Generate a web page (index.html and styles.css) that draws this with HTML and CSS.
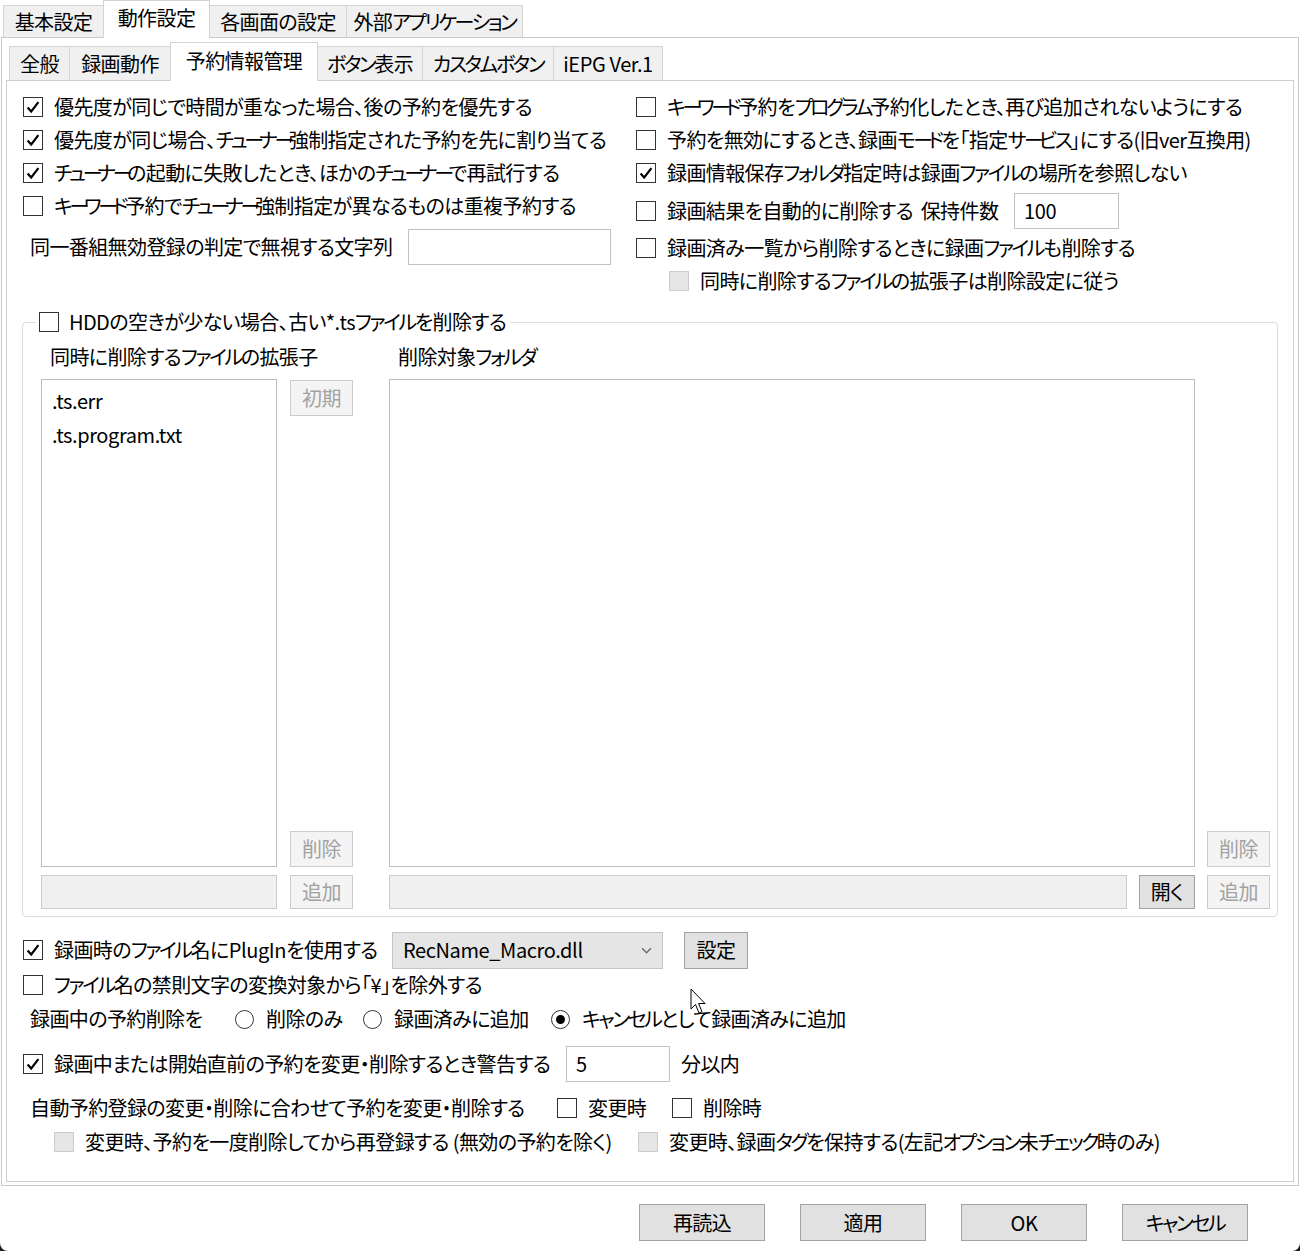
FILE: index.html
```html
<!DOCTYPE html>
<html lang="ja">
<head>
<meta charset="utf-8">
<title>設定</title>
<link rel="stylesheet" href="styles.css">
</head>
<body>
<div class="window">
  <div class="tabs outer-tabs">
    <div class="tab ot1">基本設定</div>
    <div class="tab ot2 active">動作設定</div>
    <div class="tab ot3">各画面の設定</div>
    <div class="tab ot4">外部<span class="k">アプリケーション</span></div>
  </div>
  <div class="panel outer-panel">
    <div class="tabs inner-tabs">
      <div class="tab it1">全般</div>
      <div class="tab it2">録画動作</div>
      <div class="tab it3 active">予約情報管理</div>
      <div class="tab it4"><span class="k">ボタン</span>表示</div>
      <div class="tab it5"><span class="k">カスタムボタン</span></div>
      <div class="tab it6 latin">iEPG Ver.1</div>
    </div>
    <div class="panel inner-panel">
      <div class="top-grid">
        <div class="col col-left">
          <div class="row"><span class="cb checked"><svg viewBox="0 0 20 20"><polyline points="4,10.5 8,15 16,4.5"/></svg></span><span>優先度が同じで時間が重なった場合、後の予約を優先する</span></div>
          <div class="row"><span class="cb checked"><svg viewBox="0 0 20 20"><polyline points="4,10.5 8,15 16,4.5"/></svg></span><span>優先度が同じ場合、<span class="k tn">チュ<span class="bar">ー</span>ナ<span class="bar">ー</span></span>強制指定された予約を先に割り当てる</span></div>
          <div class="row"><span class="cb checked"><svg viewBox="0 0 20 20"><polyline points="4,10.5 8,15 16,4.5"/></svg></span><span><span class="k tn">チュ<span class="bar">ー</span>ナ<span class="bar">ー</span></span>の起動に失敗したとき、ほかの<span class="k tn">チュ<span class="bar">ー</span>ナ<span class="bar">ー</span></span>で再試行する</span></div>
          <div class="row"><span class="cb"></span><span><span class="k tn">キ<span class="bar">ー</span>ワ<span class="bar">ー</span>ド</span>予約で<span class="k tn">チュ<span class="bar">ー</span>ナ<span class="bar">ー</span></span>強制指定が異なるものは重複予約する</span></div>
          <div class="row row-input row-ignore"><span class="lbl lbl-ignore">同一番組無効登録の判定で無視する文字列</span><span class="textbox tb-ignore"></span></div>
        </div>
        <div class="col col-right">
          <div class="row"><span class="cb"></span><span><span class="k tn">キ<span class="bar">ー</span>ワ<span class="bar">ー</span>ド</span>予約を<span class="k tn">プログラム</span>予約化したとき、再び追加されないようにする</span></div>
          <div class="row"><span class="cb"></span><span>予約を無効にするとき、録画<span class="k">モ<span class="bar">ー</span>ド</span>を「指定<span class="k">サ<span class="bar">ー</span>ビス</span>」にする(旧ver互換用)</span></div>
          <div class="row"><span class="cb checked"><svg viewBox="0 0 20 20"><polyline points="4,10.5 8,15 16,4.5"/></svg></span><span>録画情報保存<span class="k">フォルダ</span>指定時は録画<span class="k">ファイル</span>の場所を参照しない</span></div>
          <div class="row row-input row-keep"><span class="item item-keep"><span class="cb"></span><span>録画結果を自動的に削除する&nbsp; 保持件数</span></span><span class="textbox tb-keep latin">100</span></div>
          <div class="row row-after"><span class="cb"></span><span>録画済み一覧から削除するときに録画<span class="k">ファイル</span>も削除する</span></div>
          <div class="row row-sub"><span class="cb disabled"></span><span>同時に削除する<span class="k">ファイル</span>の拡張子は削除設定に従う</span></div>
        </div>
      </div>

      <fieldset class="group">
        <legend><span class="cb"></span><span>HDDの空きが少ない場合、古い*.ts<span class="k">ファイル</span>を削除する</span></legend>
        <div class="group-grid">
          <div class="g-label c1">同時に削除する<span class="k">ファイル</span>の拡張子</div>
          <div class="g-label c3">削除対象<span class="k">フォルダ</span></div>

          <div class="listbox c1 latin">
            <div class="li">.ts.err</div>
            <div class="li">.ts.program.txt</div>
          </div>
          <div class="btncol c2">
            <span class="btn disabled">初期</span>
            <span class="btn disabled">削除</span>
          </div>
          <div class="listbox c3"></div>
          <div class="btncol btncol-end c4">
            <span class="btn disabled">削除</span>
          </div>

          <div class="textbox tb-disabled c1 rowb"></div>
          <div class="c2 rowb"><span class="btn disabled btn-fill">追加</span></div>
          <div class="folder-row c3 rowb"><span class="textbox tb-disabled tb-folder"></span><span class="btn btn-open">開く</span></div>
          <div class="c4 rowb"><span class="btn disabled btn-fill">追加</span></div>
        </div>
      </fieldset>

      <div class="lower">
        <div class="lrow lrow-plugin">
          <span class="item item-plugin"><span class="cb checked"><svg viewBox="0 0 20 20"><polyline points="4,10.5 8,15 16,4.5"/></svg></span><span>録画時の<span class="k">ファイル</span>名に<span class="latin">PlugIn</span>を使用する</span></span>
          <span class="combo"><span class="latin">RecName_Macro.dll</span><svg class="chev" viewBox="0 0 10 6"><polyline points="1,1 5,5 9,1"/></svg></span>
          <span class="btn btn-set">設定</span>
        </div>
        <div class="lrow lrow-yen">
          <span class="item"><span class="cb"></span><span><span class="k">ファイル</span>名の禁則文字の変換対象から「¥」を除外する</span></span>
        </div>
        <div class="lrow lrow-radio">
          <span class="lbl lbl-radio">録画中の予約削除を</span>
          <span class="item item-r1"><span class="radio"></span><span>削除のみ</span></span>
          <span class="item item-r2"><span class="radio"></span><span>録画済みに追加</span></span>
          <span class="item"><span class="radio checked"></span><span><span class="k">キャンセル</span>として録画済みに追加</span></span>
        </div>
        <div class="lrow lrow-warn">
          <span class="item item-warn"><span class="cb checked"><svg viewBox="0 0 20 20"><polyline points="4,10.5 8,15 16,4.5"/></svg></span><span>録画中または開始直前の予約を変更・削除するとき警告する</span></span>
          <span class="textbox tb-min latin">5</span>
          <span class="unit">分以内</span>
        </div>
        <div class="lrow lrow-auto">
          <span class="lbl lbl-auto">自動予約登録の変更・削除に合わせて予約を変更・削除する</span>
          <span class="item item-chg"><span class="cb"></span><span>変更時</span></span>
          <span class="item"><span class="cb"></span><span>削除時</span></span>
        </div>
        <div class="lrow lrow-dis">
          <span class="item item-dis1"><span class="cb disabled"></span><span>変更時、予約を一度削除してから再登録する (無効の予約を除く)</span></span>
          <span class="item"><span class="cb disabled"></span><span>変更時、録画<span class="k">タグ</span>を保持する(左記<span class="k">オプション</span>未<span class="k">チェック</span>時のみ)</span></span>
        </div>
      </div>
    </div>
  </div>

  <div class="dialog-buttons">
    <span class="btn btn-dlg">再読込</span>
    <span class="btn btn-dlg">適用</span>
    <span class="btn btn-dlg latin">OK</span>
    <span class="btn btn-dlg"><span class="k">キャンセル</span></span>
  </div>

  <svg class="cursor" viewBox="0 0 18 28"><path d="M1,1 L1,21 L5.5,16.5 L9,25 L12,23.8 L8.6,15.5 L15,15.5 Z"/></svg>
</div>
</body>
</html>
```

FILE: styles.css
```css
html {
  background: #1e1e1e;
}
body {
  margin: 0;
  width: 1300px;
  height: 1251px;
  background: #ffffff;
  border-radius: 0 0 8px 8px;
  overflow: hidden;
  font-family: "Noto Sans CJK JP", "Noto Sans", sans-serif;
  font-feature-settings: "palt" 1;
  font-size: 20px;
  line-height: 1.2;
  letter-spacing: -0.6px;
  color: #000;
}
.k {
  letter-spacing: -2.4px;
}
.k .bar {
  letter-spacing: -5px;
}
.k.tn {
  letter-spacing: -3.2px;
}
.k.tn .bar {
  letter-spacing: -5.5px;
}
.latin {
  letter-spacing: -0.4px;
}
.window {
  position: relative;
  width: 1300px;
  height: 1251px;
}

/* ---------- tabs ---------- */
.tabs {
  display: flex;
  align-items: flex-end;
}
.tab {
  box-sizing: border-box;
  display: flex;
  align-items: center;
  justify-content: center;
  background: #f0f0f0;
  border: 1px solid #d4d4d4;
  border-bottom: none;
  margin-right: -1px;
  white-space: nowrap;
}
.tab.active {
  background: #ffffff;
  position: relative;
  z-index: 2;
  margin-bottom: -1px;
}
.outer-tabs {
  height: 37px;
  padding-left: 3px;
}
.outer-tabs .tab { height: 32px; }
.outer-tabs .tab.active { height: 38px; padding-bottom: 3px; }
.ot1 { width: 101px; }
.ot2 { width: 107px; }
.ot3 { width: 138px; }
.ot4 { width: 177px; }

.inner-tabs {
  height: 42px;
  padding-left: 3px;
}
.inner-tabs .tab { height: 34px; }
.inner-tabs .tab.active { height: 39px; padding-bottom: 3px; }
.it1 { width: 61px; }
.it2 { width: 102px; }
.it3 { width: 148px; }
.it4 { width: 106px; }
.it5 { width: 132px; }
.it6 { width: 110px; }

/* ---------- panels ---------- */
.panel {
  box-sizing: border-box;
}
.outer-panel {
  margin-left: 1px;
  width: 1298px;
  height: 1149px;
  border: 1px solid #c9c9c9;
  padding: 0 4px 3px 4px;
}
.inner-panel {
  height: 1102px;
  border: 1px solid #cfcfcf;
  padding: 9px 0 0 16px;
}

/* ---------- top section ---------- */
.top-grid {
  display: grid;
  grid-template-columns: 613px 1fr;
  height: 207px;
}
.row {
  display: flex;
  align-items: center;
  height: 33px;
  white-space: nowrap;
}
.row-ignore {
  margin-top: 7px;
  height: 35px;
  padding-left: 7px;
}
.lbl-ignore { width: 378px; }
.row-keep {
  margin-top: 4px;
  height: 35px;
}
.item-keep { width: 378px; }
.row-after { margin-top: 3px; }
.row-sub { padding-left: 33px; }

.item {
  display: flex;
  align-items: center;
  white-space: nowrap;
}

/* ---------- check boxes / radios ---------- */
.cb {
  box-sizing: border-box;
  flex: none;
  width: 20px;
  height: 20px;
  border: 1px solid #333333;
  background: #ffffff;
  margin-right: 11px;
  display: inline-flex;
}
.cb svg {
  width: 18px;
  height: 18px;
  fill: none;
  stroke: #000;
  stroke-width: 2.4;
}
.cb.disabled {
  background: #e6e6e6;
  border-color: #cccccc;
}
.radio {
  box-sizing: border-box;
  flex: none;
  width: 19px;
  height: 19px;
  border: 1px solid #333333;
  border-radius: 50%;
  margin-right: 12px;
  display: inline-flex;
  align-items: center;
  justify-content: center;
}
.radio.checked::after {
  content: "";
  width: 9px;
  height: 9px;
  border-radius: 50%;
  background: #000;
}

/* ---------- text boxes / buttons ---------- */
.textbox {
  box-sizing: border-box;
  display: flex;
  align-items: center;
  border: 1px solid #c2c2c2;
  background: #ffffff;
  padding-left: 9px;
}
.tb-ignore { width: 203px; height: 36px; }
.tb-keep { width: 105px; height: 36px; }
.tb-disabled {
  background: #f0f0f0;
  border-color: #cccccc;
}
.btn {
  box-sizing: border-box;
  display: flex;
  align-items: center;
  justify-content: center;
  background: #e1e1e1;
  border: 1px solid #a3a3a3;
  white-space: nowrap;
}
.btn.disabled {
  background: #f4f4f4;
  border-color: #cccccc;
  color: #a2a2a2;
}

/* ---------- group ---------- */
.group {
  margin: 13px 15px 0 -1px;
  padding: 0 0 7px 0;
  border: 1px solid #dcdcdc;
  border-radius: 4px;
  min-width: 0;
}
.group legend {
  margin-left: 13px;
  padding: 0 4px 0 3px;
  height: 24px;
  display: flex;
  align-items: center;
  white-space: nowrap;
}
.group legend .cb { margin-right: 10px; }
.group-grid {
  display: grid;
  grid-template-columns: 18px 236px 13px 63px 36px 806px 12px 63px;
  grid-template-rows: 28px 488px 34px;
  row-gap: 8px;
  margin-top: 9px;
}
.c1 { grid-column: 2; }
.c2 { grid-column: 4; }
.c3 { grid-column: 6; }
.c4 { grid-column: 8; }
.rowb { grid-row: 3; }
.g-label {
  grid-row: 1;
  display: flex;
  align-items: center;
  padding-left: 9px;
  white-space: nowrap;
}
.listbox {
  grid-row: 2;
  box-sizing: border-box;
  border: 1px solid #bdbdbd;
  background: #fff;
  padding: 4px 0 0 10px;
}
.li {
  height: 34px;
  display: flex;
  align-items: center;
}
.btncol {
  grid-row: 2;
  display: flex;
  flex-direction: column;
  justify-content: space-between;
  padding-top: 1px;
}
.btncol-end { justify-content: flex-end; }
.btncol .btn { height: 36px; }
.btn-fill { height: 100%; }
.folder-row {
  display: flex;
  gap: 12px;
}
.tb-folder { flex: 1; }
.btn-open { width: 56px; }

/* ---------- lower rows ---------- */
.lower {
  margin-top: 15px;
}
.lrow {
  display: flex;
  align-items: center;
  white-space: nowrap;
}
.lrow-plugin { height: 36px; }
.item-plugin { width: 369px; }
.combo {
  box-sizing: border-box;
  width: 271px;
  height: 37px;
  display: flex;
  align-items: center;
  justify-content: space-between;
  padding: 0 10px 0 10px;
  background: #e5e5e5;
  border: 1px solid #c4c4c4;
}
.chev {
  width: 11px;
  height: 7px;
  fill: none;
  stroke: #6b6b6b;
  stroke-width: 1.3;
}
.btn-set {
  margin-left: 21px;
  width: 64px;
  height: 37px;
}
.lrow-yen { height: 34px; }
.lrow-radio { height: 34px; padding-left: 7px; }
.lbl-radio { width: 205px; }
.item-r1 { width: 128px; }
.item-r2 { width: 188px; }
.lrow-warn { height: 35px; margin-top: 10px; }
.item-warn { width: 543px; }
.tb-min { width: 104px; height: 36px; }
.unit { margin-left: 11px; }
.lrow-auto { height: 34px; margin-top: 10px; padding-left: 7px; }
.lbl-auto { width: 527px; }
.item-chg { width: 115px; }
.lrow-dis { height: 34px; padding-left: 31px; }
.item-dis1 { width: 584px; }

/* ---------- dialog buttons ---------- */
.dialog-buttons {
  display: flex;
  justify-content: flex-end;
  gap: 35px;
  margin-top: 18px;
  padding-right: 52px;
}
.btn-dlg {
  width: 126px;
  height: 37px;
}

/* ---------- mouse cursor overlay ---------- */
.cursor {
  position: absolute;
  left: 690px;
  top: 988px;
  width: 18px;
  height: 28px;
  fill: #ffffff;
  stroke: #000000;
  stroke-width: 1;
}
```
